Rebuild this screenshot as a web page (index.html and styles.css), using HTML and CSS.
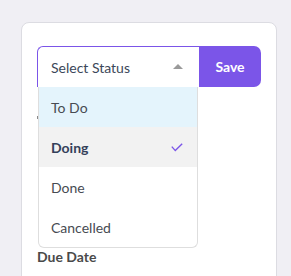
FILE: index.html
```html
<!DOCTYPE html>
<html lang="en">
<head>
    <meta charset="UTF-8">
    <title>Task Status</title>
    <link rel="stylesheet" href="styles.css">
</head>
<body>
    <div class="card">
        <div class="status-row">
            <div class="select-wrap">
                <div class="select-box">
                    <span>Select Status</span>
                    <span class="arrow-up"></span>
                </div>
                <ul class="options">
                    <li class="opt hover">To Do</li>
                    <li class="opt selected">
                        Doing
                        <svg class="check" width="12" height="9" viewBox="0 0 12 9">
                            <polyline points="0.8,3.6 4.3,7.6 11.2,0.8" fill="none" stroke="#7b55e8" stroke-width="1.4"/>
                        </svg>
                    </li>
                    <li class="opt">Done</li>
                    <li class="opt">Cancelled</li>
                </ul>
            </div>
            <button class="save-btn">Save</button>
        </div>

        <div class="field-edge"></div>
        <label class="field-label">Due Date</label>
    </div>
</body>
</html>
```

FILE: styles.css
```css
* {
    box-sizing: border-box;
    margin: 0;
    padding: 0;
}

body {
    font-family: Lato, 'Open Sans', sans-serif;
    background: #f0eff4;
    padding: 22px 14px 0 21px;
    height: 276px;
    overflow: hidden;
}

.card {
    width: 256px;
    height: 300px;
    background: #fff;
    border: 1px solid #dcdce2;
    border-radius: 8px;
    padding: 23px 15px;
}

.status-row {
    display: flex;
    height: 41px;
}

.select-wrap {
    position: relative;
    width: 162px;
}

.select-box {
    height: 41px;
    border: 1px solid #7b55e8;
    border-right: none;
    border-bottom: none;
    border-radius: 6px 0 0 0;
    display: flex;
    align-items: center;
    justify-content: space-between;
    padding: 0 16px 0 13px;
    font-size: 14px;
    color: #3b4759;
}

.arrow-up {
    width: 0;
    height: 0;
    border-left: 5px solid transparent;
    border-right: 5px solid transparent;
    border-bottom: 5px solid #9a9a9a;
    margin-top: -1px;
}

.options {
    position: absolute;
    top: 41px;
    left: 1px;
    width: 160px;
    list-style: none;
    background: #fff;
    border: 1px solid #dedede;
    border-top: none;
    border-radius: 0 0 6px 6px;
    z-index: 2;
}

.opt {
    height: 40px;
    display: flex;
    align-items: center;
    justify-content: space-between;
    padding: 0 14px 0 12px;
    font-size: 14px;
    color: #474b52;
}

.opt.hover {
    background: #e4f4fc;
}

.opt.selected {
    background: #f2f2f2;
    font-weight: 700;
    color: #34405a;
}

.check {
    margin-top: 1px;
}

.save-btn {
    width: 62px;
    height: 41px;
    border: none;
    border-radius: 0 7px 7px 0;
    background: #7b55e8;
    color: #fff;
    font-family: Lato, sans-serif;
    font-size: 14px;
    font-weight: 700;
}

/* edge of the field hidden under the open dropdown */
.field-edge {
    width: 2px;
    height: 3px;
    margin-top: 29px;
    background: #8a8a8a;
}

.field-label {
    display: block;
    font-size: 14px;
    font-weight: 700;
    color: #4a4a4a;
    line-height: 18px;
    margin-top: 129px;
}
```
